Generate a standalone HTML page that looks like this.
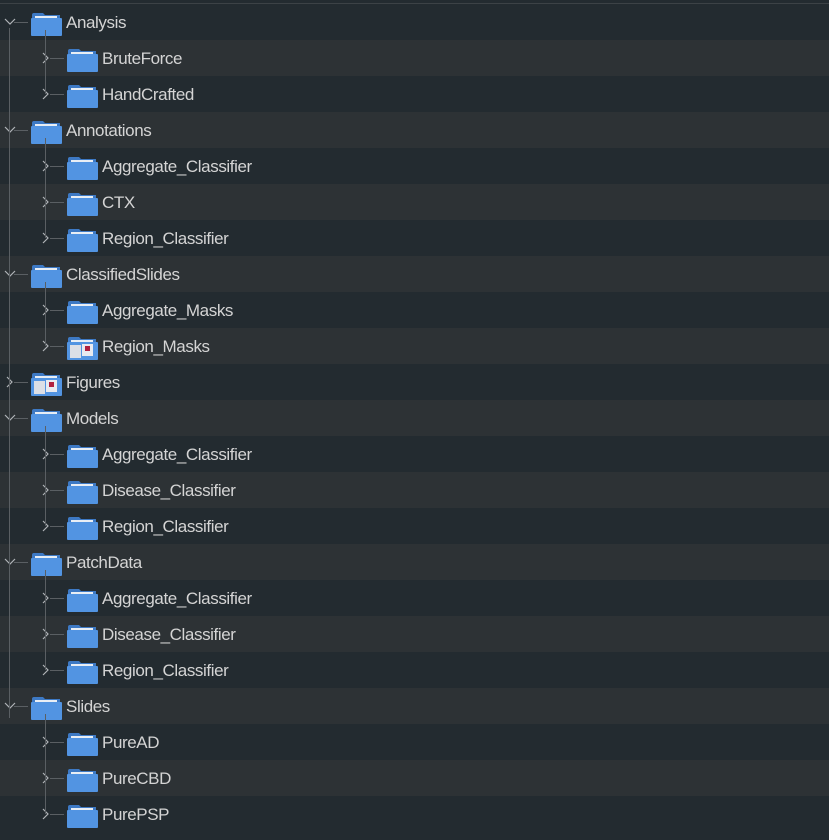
<html><head><style>
body{margin:0;width:829px;height:840px;background:#232b30;overflow:hidden;font-family:"Liberation Sans",sans-serif;position:relative}
.r{position:absolute;left:0;width:829px;height:36px}
.a{background:#2d3235}
.t{position:absolute;color:#d4d4d4;font-size:17px;top:9px;letter-spacing:-0.4px}
.l{position:absolute;background:#5a5f63}
</style></head><body>
<div style="position:absolute;top:3px;left:0;width:829px;height:1px;background:#3c4246"></div>
<div id="c"></div>
<script>
var rows=[["Analysis",0],["BruteForce",1],["HandCrafted",1],["Annotations",0],["Aggregate_Classifier",1],["CTX",1],["Region_Classifier",1],["ClassifiedSlides",0],["Aggregate_Masks",1],["Region_Masks",1,1],["Figures",0,1],["Models",0],["Aggregate_Classifier",1],["Disease_Classifier",1],["Region_Classifier",1],["PatchData",0],["Aggregate_Classifier",1],["Disease_Classifier",1],["Region_Classifier",1],["Slides",0],["PureAD",1],["PureCBD",1],["PurePSP",1]];
var h='';
rows.forEach(function(r,i){
 var top=4+36*i, x=r[1]?36:0, exp=!r[1]&&!r[2];
 h+='<div class="r'+(i%2?' a':'')+'" style="top:'+top+'px">';
 h+='<div class="l" style="left:'+(x+14)+'px;top:18px;width:14px;height:1px"></div>';
 if(exp) h+='<svg style="position:absolute;left:'+(x+4)+'px;top:14px" width="12" height="8"><path d="M1 1L6 6L11 1" stroke="#b0b4b8" stroke-width="1.2" fill="none"/></svg>';
 else h+='<svg style="position:absolute;left:'+(x+6)+'px;top:12px" width="8" height="12"><path d="M1 1L6 6L1 11" stroke="#b0b4b8" stroke-width="1.2" fill="none"/></svg>';
 var fx=x+31;
 h+='<svg style="position:absolute;left:'+fx+'px;top:8px" width="31" height="24"><path d="M1 3Q1 1 3 1h9l2 2h15v5H1z" fill="#3d79c4"/><rect x="4" y="4" width="22" height="3" fill="#e8eef5"/><rect x="0" y="6" width="31" height="18" rx="1" fill="#5294e2"/>'+(r[2]?'<rect x="3" y="9" width="11" height="13" fill="#dcdfe6"/><rect x="15" y="8" width="11" height="12" fill="#e8eaf0"/><rect x="18" y="10" width="5" height="5" fill="#b02040"/>':'')+'</svg>';
 h+='<div class="t" style="left:'+(x+66)+'px">'+r[0]+'</div></div>';
});
h+='<div class="l" style="left:9px;top:28px;width:1px;height:690px"></div>';
[[0,2],[3,6],[7,9],[11,14],[15,18],[19,22]].forEach(function(g){
 var t=4+36*g[0]+26,b=4+36*g[1]+18;
 h+='<div class="l" style="left:45px;top:'+t+'px;width:1px;height:'+(b-t)+'px"></div>';
});
document.getElementById('c').innerHTML=h;
</script>
</body></html>
